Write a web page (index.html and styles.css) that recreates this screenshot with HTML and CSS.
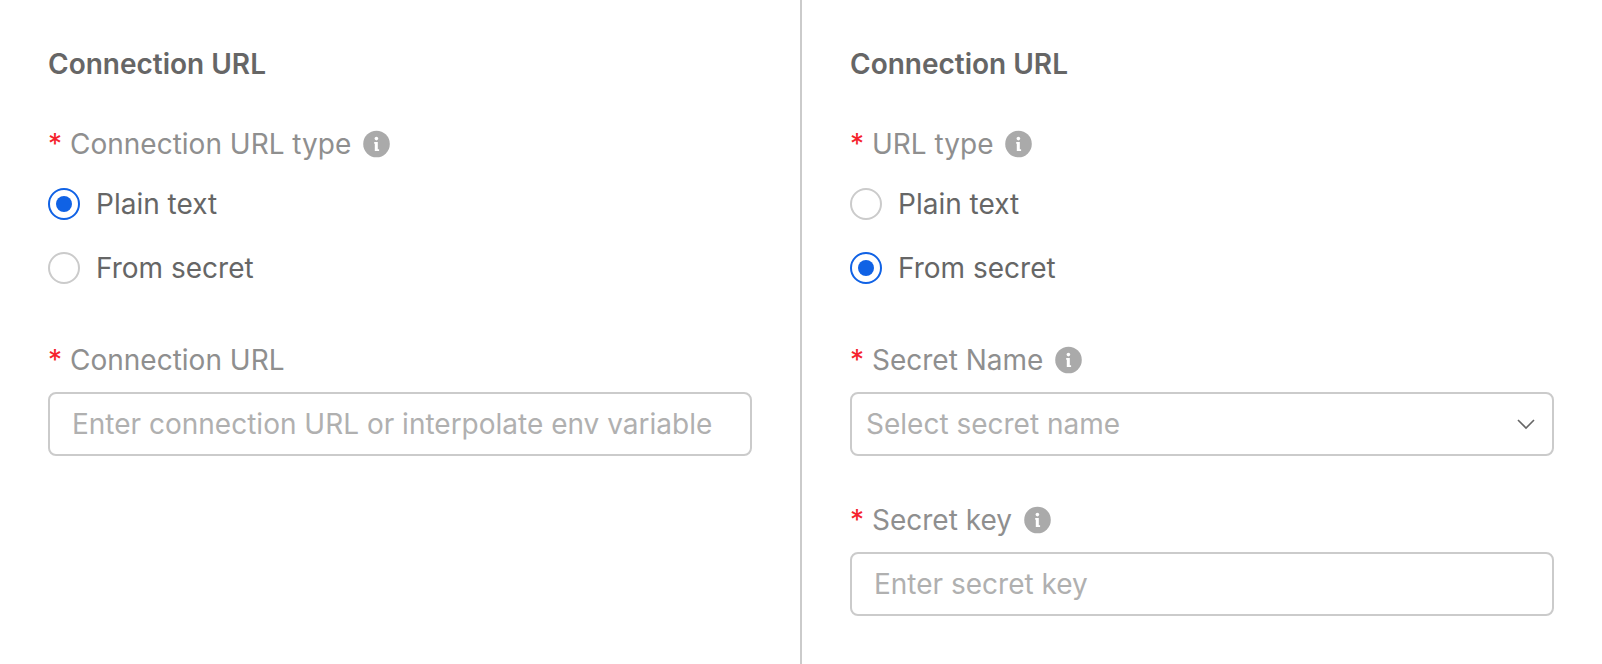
FILE: index.html
```html
<!DOCTYPE html>
<html lang="en">
<head>
<meta charset="utf-8">
<title>Connection URL</title>
<link rel="stylesheet" href="styles.css">
</head>
<body>
<main class="columns">
  <form class="panel">
    <h2 class="title">Connection URL</h2>
    <fieldset class="group">
      <legend class="label legend"><span class="required">*</span>Connection URL type <svg class="info" viewBox="0 0 28 28" aria-hidden="true"><circle cx="13.5" cy="14" r="13.3"/><path d="M11.2 12h3.6v7.2h1.3v1.7h-4.3v-7.2h-.6z"/><circle class="dot" cx="13.4" cy="8.6" r="1.8"/></svg></legend>
      <label class="option"><input class="radio" type="radio" name="plain-type" checked>Plain text</label>
      <label class="option"><input class="radio" type="radio" name="plain-type">From secret</label>
    </fieldset>
    <div class="field">
      <label class="label" for="url"><span class="required">*</span>Connection URL</label>
      <input class="control" id="url" type="text" placeholder="Enter connection URL or interpolate env variable">
    </div>
  </form>
  <form class="panel">
    <h2 class="title">Connection URL</h2>
    <fieldset class="group">
      <legend class="label legend"><span class="required">*</span>URL type <svg class="info" viewBox="0 0 28 28" aria-hidden="true"><circle cx="13.5" cy="14" r="13.3"/><path d="M11.2 12h3.6v7.2h1.3v1.7h-4.3v-7.2h-.6z"/><circle class="dot" cx="13.4" cy="8.6" r="1.8"/></svg></legend>
      <label class="option"><input class="radio" type="radio" name="secret-type">Plain text</label>
      <label class="option"><input class="radio" type="radio" name="secret-type" checked>From secret</label>
    </fieldset>
    <div class="field">
      <label class="label" for="name"><span class="required">*</span>Secret Name <svg class="info" viewBox="0 0 28 28" aria-hidden="true"><circle cx="13.5" cy="14" r="13.3"/><path d="M11.2 12h3.6v7.2h1.3v1.7h-4.3v-7.2h-.6z"/><circle class="dot" cx="13.4" cy="8.6" r="1.8"/></svg></label>
      <div class="select-wrap">
        <select class="control select" id="name"><option>Select secret name</option></select>
        <svg class="chevron" viewBox="0 0 20 12" aria-hidden="true"><path d="M2 2l8 8 8-8"/></svg>
      </div>
    </div>
    <div class="field">
      <label class="label" for="key"><span class="required">*</span>Secret key <svg class="info" viewBox="0 0 28 28" aria-hidden="true"><circle cx="13.5" cy="14" r="13.3"/><path d="M11.2 12h3.6v7.2h1.3v1.7h-4.3v-7.2h-.6z"/><circle class="dot" cx="13.4" cy="8.6" r="1.8"/></svg></label>
      <input class="control" id="key" type="text" placeholder="Enter secret key">
    </div>
  </form>
</main>
</body>
</html>
```
FILE: styles.css
```css
* { box-sizing: border-box; }
body {
  margin: 0;
  background: #fff;
  color: #666;
  font: 28px/44px Inter, sans-serif;
}
.columns { display: flex; min-height: 100vh; }
.panel { box-sizing: content-box; flex: 1; min-width: 0; padding: 42px 48px 0; }
.panel + .panel { border-left: 2px solid #cbcbcb; }
.title { margin: 0 0 36px; font-size: 28px; font-weight: 600; line-height: 44px; }
.group { margin: 0 0 38px; padding: 0; border: 0; }
.label { display: flex; align-items: center; padding: 0; color: #8f8f8f; }
.legend { padding-bottom: 6px; }
.required { width: 22px; color: #f5222d; }
.info { width: 28px; height: 28px; margin-left: 12px; fill: #aaa; }
.info path, .info .dot { fill: #fff; }
.option { display: flex; align-items: center; gap: 16px; height: 64px; }
.radio {
  display: grid;
  place-items: center;
  appearance: none;
  width: 32px;
  height: 32px;
  margin: 0;
  border: 2px solid #cbcbcb;
  border-radius: 50%;
  background: #fff;
}
.radio:checked { border-color: #1062e5; }
.radio:checked::before { content: ""; width: 16px; height: 16px; border-radius: 50%; background: #1062e5; }
.field { margin-bottom: 42px; }
.control {
  display: block;
  width: 100%;
  height: 64px;
  margin-top: 10px;
  padding: 0 22px;
  border: 2px solid #cbcbcb;
  border-radius: 8px;
  background: #fff;
  color: #666;
  font: inherit;
}
.control::placeholder { color: #b0b0b0; opacity: 1; }
.select-wrap { position: relative; }
.select { appearance: none; padding: 0 14px; color: #b0b0b0; }
.chevron {
  position: absolute;
  right: 18px;
  top: 26px;
  width: 20px;
  height: 12px;
  fill: none;
  stroke: #666;
  stroke-width: 1.6;
  pointer-events: none;
}
```
